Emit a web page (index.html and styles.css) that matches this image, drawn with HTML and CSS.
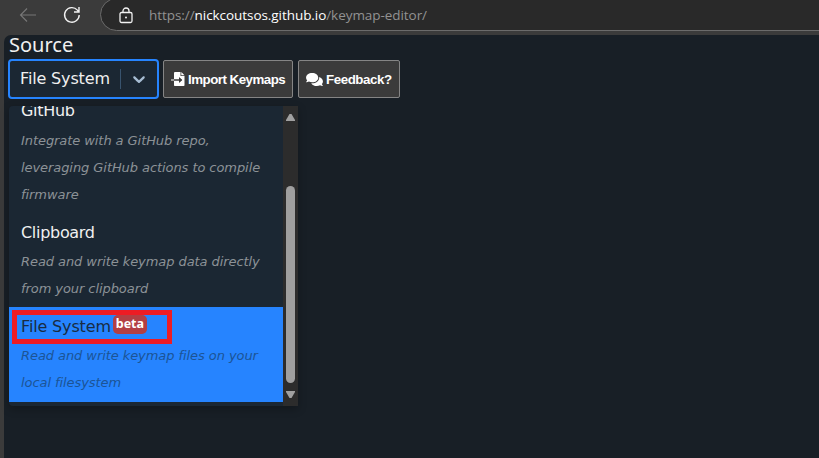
FILE: index.html
```html
<!DOCTYPE html>
<html lang="en">
<head>
<meta charset="utf-8">
<title>Keymap Editor</title>
<link rel="stylesheet" href="styles.css">
</head>
<body>
<header class="browser">
  <svg class="back" viewBox="0 0 18 16"><path d="M17 8H1.5M8 1.5 1.5 8 8 14.5"/></svg>
  <svg class="reload" viewBox="0 0 18 18"><path d="M16.2 9a7.3 7.3 0 1 1-1.8-4.9L15.8 5.8M16 1v5h-5"/></svg>
  <div class="address">
    <svg class="lock" viewBox="0 0 14 17"><rect x="1" y="5.5" width="12" height="10" rx="1.5"/><path d="M4 5.5V4a3 3 0 0 1 6 0v1.5"/><circle cx="7" cy="10.5" r="1"/></svg>
    <span class="url">https://<b>nickcoutsos.github.io</b>/keymap-editor/</span>
  </div>
</header>
<main class="page">
  <label class="label">Source</label>
  <div class="toolbar">
    <div class="select">
      <span class="value">File System</span>
      <span class="divider"></span>
      <svg class="chevron" viewBox="0 0 20 20"><path d="M4.516 7.548c0.436-0.446 1.043-0.481 1.576 0l3.908 3.747 3.908-3.747c0.533-0.481 1.141-0.446 1.574 0 0.436 0.445 0.408 1.197 0 1.615-0.406 0.418-4.695 4.502-4.695 4.502-0.217 0.223-0.502 0.335-0.787 0.335s-0.57-0.112-0.789-0.335c0 0-4.287-4.084-4.695-4.502s-0.436-1.17 0-1.615z"/></svg>
    </div>
    <button class="button import"><svg class="file" viewBox="0 0 14 14"><path fill-rule="evenodd" d="M4 0H9.500V4H13.500V13.200a.8.8 0 0 1-.8.8H3.800a.8.8 0 0 1-.8-.8V8.600H8V10.800L11.200 8 8 5.200V7.400H3V1a1 1 0 0 1 1-1zM10.300 0 13.500 3.200H10.300zM0 7.400H3V8.600H0z"/><path d="M3 7.400H8V5.200L11.200 8 8 10.800V8.600H3z" class="cut"/></svg><span>Import Keymaps</span></button>
    <button class="button feedback"><svg class="chat" viewBox="0 0 576 512"><path d="M416 192c0-88.400-93.100-160-208-160S0 103.600 0 192c0 34.300 14.100 65.900 38 92-13.400 30.200-35.500 54.200-35.800 54.500-2.200 2.300-2.800 5.700-1.500 8.700S4.800 352 8 352c36.600 0 66.900-12.300 88.700-25 32.200 15.700 70.300 25 111.300 25 114.900 0 208-71.600 208-160zm122 220c23.900-26 38-57.700 38-92 0-66.900-53.500-124.200-129.300-148.100.9 6.600 1.300 13.300 1.300 20.100 0 105.900-107.700 192-240 192-10.800 0-21.300-.8-31.700-1.900C207.800 439.600 281.800 480 368 480c41 0 79.100-9.200 111.300-25 21.800 12.700 52.100 25 88.700 25 3.200 0 6.100-1.900 7.300-4.800 1.300-2.900.7-6.300-1.500-8.700-.3-.3-22.400-24.200-35.800-54.500z"/></svg><span>Feedback?</span></button>
  </div>
  <div class="menu">
    <div class="options">
      <section class="option github"><h3>GitHub</h3><p>Integrate with a GitHub repo,<br>leveraging GitHub actions to compile<br>firmware</p></section>
      <section class="option"><h3>Clipboard</h3><p>Read and write keymap data directly<br>from your clipboard</p></section>
      <section class="option selected"><h3>File System<span class="beta">beta</span></h3><p>Read and write keymap files on your<br>local filesystem</p><div class="highlight"></div></section>
    </div>
    <div class="scrollbar">
      <svg class="arrow" viewBox="0 0 9 7"><path d="M3.500 0H5.500L9 6v1H0V6z"/></svg>
      <div class="thumb"></div>
      <svg class="arrow" viewBox="0 0 9 7"><path d="M0 0h9v1L5.500 7H3.500L0 1z"/></svg>
    </div>
  </div>
</main>
</body>
</html>
```
FILE: styles.css
```css
* { box-sizing: border-box; }
body { margin: 0; width: 819px; height: 458px; overflow: hidden; background: #3b3b3b; font-family: "DejaVu Sans", sans-serif; color: #f0f0f0; }
svg { display: block; flex: none; }
.browser { height: 35px; display: flex; align-items: flex-start; padding-left: 19px; overflow: hidden; }
.back { width: 18px; height: 16px; margin-top: 7px; fill: none; stroke: #777; stroke-width: 1.1; }
.reload { width: 18px; height: 18px; margin: 6px 0 0 26px; fill: none; stroke: #f2f2f2; stroke-width: 1.4; }
.address { flex: 1; height: 33px; margin: -2px -20px 0 19px; border: 1px solid #6b6b6b; border-radius: 17px; background: #292929; display: flex; align-items: center; padding-left: 18px; }
.lock { width: 14px; height: 17px; margin-top: 1px; fill: none; stroke: #f2f2f2; stroke-width: 1.3; }
.lock circle { fill: #f2f2f2; stroke: none; }
.url { margin: 1px 0 0 16px; font: 13.5px/20px "Open Sans", sans-serif; letter-spacing: -.06px; color: #929292; white-space: nowrap; }
.url b { font-weight: 400; color: #fff; }
.page { height: 423px; margin-left: 4px; padding-left: 4px; background: #181f26; border-top-left-radius: 7px; }
.label { display: block; height: 24px; font: 20px/20px "Noto Sans", sans-serif; padding-left: 1px; }
.toolbar { display: flex; gap: 4px; align-items: center; height: 40px; }
.select { width: 151px; height: 40px; border: 2px solid #2684ff; border-radius: 4px; background: #1b2733; display: flex; align-items: center; padding-left: 10px; }
.value { width: 100px; margin-top: -2px; font-size: 16px; letter-spacing: -.15px; white-space: nowrap; }
.divider { width: 1px; height: 20px; background: #38536e; }
.chevron { width: 20px; height: 20px; margin-left: 8px; fill: #a7bdd4; }
.button { height: 38px; border: 1px solid #858585; border-radius: 2px; background: #3b3b3b; color: #fff; font: bold 13.333px "Liberation Sans", sans-serif; letter-spacing: -.52px; padding: 0 0 0 7px; display: flex; align-items: center; white-space: nowrap; }
.button svg { fill: #fff; }
.button .cut { fill: #3b3b3b; }
.import { width: 130px; }
.feedback { width: 102px; margin-left: 1px; letter-spacing: -.44px; }
.file { width: 14px; height: 14px; margin-right: 3px; }
.chat { width: 17px; height: 15px; margin-right: 3px; }
.menu { width: 289px; height: 300px; margin: 7px 0 0 1px; display: flex; overflow: hidden; border-radius: 4px 0 0 4px; background: #1b2733; box-shadow: 0 3px 9px #0004; }
.options { width: 274px; padding-bottom: 4px; display: flex; flex-direction: column; justify-content: flex-end; }
.option { padding: 7px 12px 5px; flex: none; }
.option h3 { margin: 0; height: 27px; font-weight: 400; font-size: 16px; line-height: 24px; letter-spacing: -.3px; display: flex; }
.option p { margin: 0; font-style: italic; font-size: 13px; line-height: 27px; letter-spacing: -.07px; color: #8c9297; white-space: nowrap; }
.github { padding-bottom: 6px; }
.github h3 { height: 28px; }
.selected { position: relative; height: 95px; background: #2684ff; color: #192c43; }
.selected h3 { height: 28px; letter-spacing: -.15px; line-height: 25px; }
.selected p { color: #1c5496; }
.beta { height: 19px; width: 34px; margin: 1px 0 0 2px; border-radius: 5px; background: #b33f44; color: #fff; font: bold 12.5px/17px "Noto Sans", sans-serif; letter-spacing: 0; text-align: center; }
.highlight { position: absolute; left: 3px; top: 3px; width: 160px; height: 34px; border: 5px solid #ed1c24; }
.scrollbar { width: 15px; background: #2c2c2c; display: flex; flex-direction: column; align-items: center; padding: 8px 0; }
.arrow { width: 9px; height: 7px; fill: #a0a0a0; }
.thumb { width: 9px; height: 197px; margin: 65px 0 8px; border-radius: 5px; background: #9f9f9f; }
```
